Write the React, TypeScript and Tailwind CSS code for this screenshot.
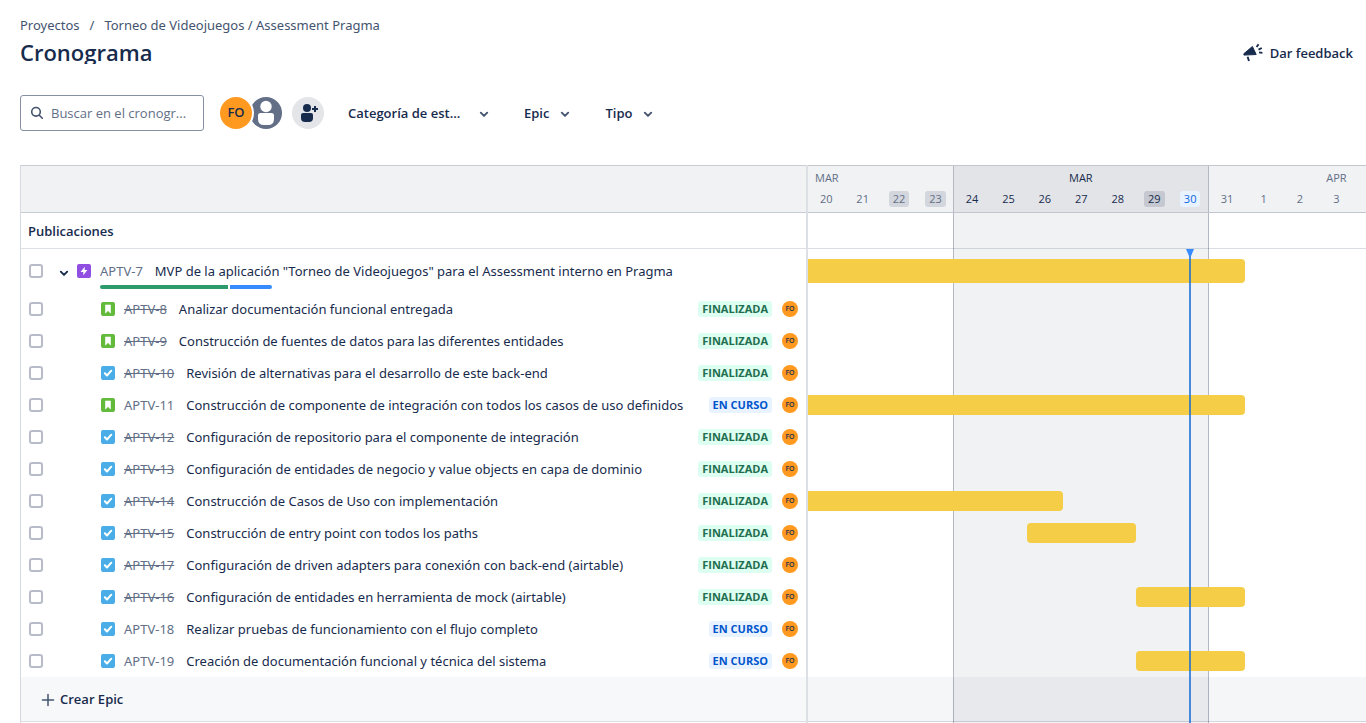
import React from "react";

type IssueType = "story" | "task";
type Status = "FINALIZADA" | "EN CURSO";

interface Issue {
  key: string;
  type: IssueType;
  summary: string;
  status: Status;
  bar?: string;
}

const issues: Issue[] = [
  { key: "APTV-8", type: "story", summary: "Analizar documentación funcional entregada", status: "FINALIZADA" },
  { key: "APTV-9", type: "story", summary: "Construcción de fuentes de datos para las diferentes entidades", status: "FINALIZADA" },
  { key: "APTV-10", type: "task", summary: "Revisión de alternativas para el desarrollo de este back-end", status: "FINALIZADA" },
  { key: "APTV-11", type: "story", summary: "Construcción de componente de integración con todos los casos de uso definidos", status: "EN CURSO", bar: "col-start-1 col-span-12 rounded-r" },
  { key: "APTV-12", type: "task", summary: "Configuración de repositorio para el componente de integración", status: "FINALIZADA" },
  { key: "APTV-13", type: "task", summary: "Configuración de entidades de negocio y value objects en capa de dominio", status: "FINALIZADA" },
  { key: "APTV-14", type: "task", summary: "Construcción de Casos de Uso con implementación", status: "FINALIZADA", bar: "col-start-1 col-span-7 rounded-r" },
  { key: "APTV-15", type: "task", summary: "Construcción de entry point con todos los paths", status: "FINALIZADA", bar: "col-start-7 col-span-3 rounded" },
  { key: "APTV-17", type: "task", summary: "Configuración de driven adapters para conexión con back-end (airtable)", status: "FINALIZADA" },
  { key: "APTV-16", type: "task", summary: "Configuración de entidades en herramienta de mock (airtable)", status: "FINALIZADA", bar: "col-start-10 col-span-3 rounded" },
  { key: "APTV-18", type: "task", summary: "Realizar pruebas de funcionamiento con el flujo completo", status: "EN CURSO" },
  { key: "APTV-19", type: "task", summary: "Creación de documentación funcional y técnica del sistema", status: "EN CURSO", bar: "col-start-10 col-span-3 rounded" },
];

interface Week {
  month: string;
  days: number[];
  box: string;
  monthClass: string;
}

const weeks: Week[] = [
  { month: "MAR", days: [20, 21, 22, 23], box: "col-span-4 bg-[#f1f2f4] text-[#626f86]", monthClass: "pl-[7px] text-left" },
  { month: "MAR", days: [24, 25, 26, 27, 28, 29, 30], box: "col-span-7 -ml-px border-x border-[#b3b8c3] bg-[#e3e4e8]", monthClass: "text-center" },
  { month: "APR", days: [31, 1, 2, 3], box: "col-span-7 bg-[#f1f2f4] text-[#626f86]", monthClass: "text-center" },
];

function dayClass(day: number) {
  if (day === 30) return "bg-[#e9f2ff] text-[#0c66e4]";
  if (day === 29) return "bg-[#c5c8d1]";
  if (day === 22 || day === 23) return "bg-[#d3d6dd]";
  return "";
}

function Chevron({ className }: { className: string }) {
  return (
    <svg viewBox="0 0 16 16" className={className} fill="none" stroke="currentColor" strokeWidth="1.900" strokeLinecap="round" strokeLinejoin="round" aria-hidden="true">
      <path d="M4.800 6.700 8 9.900l3.200-3.200" />
    </svg>
  );
}

function Megaphone() {
  return (
    <svg viewBox="0 0 20 20" className="size-5" fill="#172b4d" stroke="#172b4d" aria-hidden="true">
      <path d="M.8 10.800 9.400 3.500l3.800 8-12.200.6z" strokeWidth="1" strokeLinejoin="round" />
      <path d="M4.600 13.800 6 18M13.600 4l1.900-2.700M15.500 6.700l3.300-1.700M16 9.400l3.400.5" fill="none" strokeWidth="1.900" />
    </svg>
  );
}

function EpicIcon() {
  return (
    <svg viewBox="0 0 14 14" className="size-3.5 shrink-0" role="img" aria-label="Epic">
      <rect width="14" height="14" rx="2" fill="#904ee2" />
      <path d="M7.700 2.800v3.300h2.700L6.300 11.200V7.900H3.600z" fill="#fff" />
    </svg>
  );
}

function TypeIcon({ type }: { type: IssueType }) {
  if (type === "story") {
    return (
      <svg viewBox="0 0 14 14" className="size-3.5 shrink-0" role="img" aria-label="Historia">
        <rect width="14" height="14" rx="2" fill="#63ba3c" />
        <path d="M4.500 3h5v8L7 8.600 4.500 11z" fill="#fff" stroke="#fff" strokeWidth=".6" strokeLinejoin="round" />
      </svg>
    );
  }
  return (
    <svg viewBox="0 0 14 14" className="size-3.5 shrink-0" role="img" aria-label="Tarea">
      <rect width="14" height="14" rx="2" fill="#4bade8" />
      <path d="m3.800 7.300 2.200 2.200 4.300-4.800" fill="none" stroke="#fff" strokeWidth="2" strokeLinecap="round" strokeLinejoin="round" />
    </svg>
  );
}

function Check({ label }: { label: string }) {
  return (
    <input
      type="checkbox"
      aria-label={label}
      className="block size-3.5 appearance-none rounded-[3px] border-2 border-[#b7bcc8] bg-white checked:bg-[#0c66e4]"
    />
  );
}

function FilterButton({ label, slot = "" }: { label: string; slot?: string }) {
  return (
    <button type="button" className="flex h-8 items-center gap-2 rounded px-3 pt-0.5 text-[13px] font-semibold">
      <span className={`text-left whitespace-nowrap ${slot}`}>{label}</span>
      <Chevron className="size-4 text-[#44546f]" />
    </button>
  );
}

function IssueRow({ issue }: { issue: Issue }) {
  const done = issue.status === "FINALIZADA";
  return (
    <tr className="h-8">
      <td className="p-0 pl-2">
        <Check label={`Seleccionar ${issue.key}`} />
      </td>
      <td className="p-0">
        <div className="flex items-center pl-10 font-['Noto_Sans','Open_Sans',sans-serif] whitespace-nowrap">
          <TypeIcon type={issue.type} />
          <a href={`#${issue.key}`} className={`ml-[9px] text-[#626f86] ${done ? "line-through" : ""}`}>
            {issue.key}
          </a>
          <span className="ml-3">{issue.summary}</span>
        </div>
      </td>
      <td className="p-0">
        <div className="flex justify-end">
          <span
            className={`rounded-[3px] px-1 text-[11px] leading-4 font-bold whitespace-nowrap ${
              done ? "bg-[#dcfff1] text-[#216e4e]" : "bg-[#e9f2ff] text-[#0055cc]"
            }`}
          >
            {issue.status}
          </span>
        </div>
      </td>
      <td className="p-0 pr-2">
        <div className="ml-auto flex size-4 items-center justify-center rounded-full bg-[#ff991f] text-[7px] font-semibold">FO</div>
      </td>
    </tr>
  );
}

function IssuePanel() {
  return (
    <section className="w-[788px] shrink-0 border-r-2 border-l border-r-[#dcdfe4] border-l-[#d5d9e0]">
      <div className="h-12 border-y border-[#c7cbd3] bg-[#f1f2f4]" />
      <h2 className="flex h-9 items-center border-b border-[#dcdfe4] pt-0.5 pl-[7px] text-[13px] font-semibold">Publicaciones</h2>
      <table className="w-full table-fixed border-collapse text-[13px] leading-5">
        <colgroup>
          <col className="w-10" />
          <col />
          <col className="w-20" />
          <col className="w-[34px]" />
        </colgroup>
        <tbody>
          <tr className="h-11">
            <td className="p-0 pl-2">
              <Check label="Seleccionar APTV-7" />
            </td>
            <td className="p-0" colSpan={3}>
              <div className="relative flex h-11 items-center pl-[15px] font-['Noto_Sans','Open_Sans',sans-serif] whitespace-nowrap">
                <button type="button" aria-label="Contraer APTV-7" className="mr-[5px] -ml-5 pt-1 pl-0">
                  <Chevron className="size-4 text-[#172b4d]" />
                </button>
                <EpicIcon />
                <a href="#APTV-7" className="ml-[9px] text-[#626f86]">
                  APTV-7
                </a>
                <span className="ml-3">MVP de la aplicación "Torneo de Videojuegos" para el Assessment interno en Pragma</span>
                <div className="absolute bottom-1 left-[39px] flex h-1 w-[172px] gap-0.5 overflow-hidden rounded-full">
                  <div className="grow-[3] basis-0 bg-[#2d9b6c]" />
                  <div className="grow basis-0 bg-[#388bff]" />
                </div>
              </div>
            </td>
          </tr>
          {issues.map((issue) => (
            <IssueRow key={issue.key} issue={issue} />
          ))}
        </tbody>
      </table>
      <div className="flex h-[45px] items-center border-b border-[#dcdfe4] bg-[#f7f8f9] pl-5">
        <button type="button" className="flex items-center gap-[5px] pt-px text-[13px] font-semibold">
          <svg viewBox="0 0 14 14" className="size-3.5" stroke="#44546f" strokeWidth="1.500" strokeLinecap="round" aria-hidden="true">
            <path d="M7 1.500v11M1.500 7h11" />
          </svg>
          Crear Epic
        </button>
      </div>
    </section>
  );
}

function Timeline() {
  return (
    <section className="min-w-0 flex-1 overflow-hidden">
      <div className="relative flex h-full min-w-[656px] flex-col">
        <div className="absolute inset-0 grid grid-cols-18">
          <div className="col-span-7 col-start-5 -ml-px border-x border-[#b3b8c3] bg-[#f1f2f4]" />
        </div>
        <header className="relative grid h-12 grid-cols-18 border-y border-[#c1c6cf] text-[11px]">
          {weeks.map((week) => (
            <div key={week.days[0]} className={`grid grid-cols-subgrid content-start pt-1 ${week.box}`}>
              <span className={`col-span-full leading-4 ${week.monthClass}`}>{week.month}</span>
              {week.days.map((day) => (
                <span key={day} className="flex justify-center pt-[5px]">
                  <span className={`min-w-5 rounded-[3px] px-1 text-center leading-4 ${dayClass(day)}`}>{day}</span>
                </span>
              ))}
            </div>
          ))}
        </header>
        <div className="relative h-9 border-b border-[#091e42]/15" />
        <div className="relative grid h-11 grid-cols-18 items-center">
          <div className="col-span-12 h-6 rounded-r bg-[#f5cd47]" />
        </div>
        {issues.map((issue) => (
          <div key={issue.key} className="relative grid h-8 grid-cols-18 items-center">
            {issue.bar && <div className={`h-5 bg-[#f5cd47] ${issue.bar}`} />}
          </div>
        ))}
        <div className="relative h-[45px] border-b border-[#091e42]/15 bg-[#091e42]/4" />
        <div className="pointer-events-none absolute inset-0 grid grid-cols-18 pt-[84px]">
          <div className="col-start-11 flex flex-col items-center pr-0.5">
            <svg viewBox="0 0 8 7" className="h-[7px] w-2 shrink-0" fill="#388bff" aria-hidden="true">
              <path d="M0 0h8L5 7H3z" />
            </svg>
            <div className="w-0.5 flex-1 bg-[#1d6fd8]/80" />
          </div>
        </div>
      </div>
    </section>
  );
}

export default function App() {
  return (
    <div className="flex min-h-screen flex-col overflow-hidden bg-white pl-5 font-['Open_Sans','Noto_Sans',sans-serif] text-[#172b4d]">
      <nav aria-label="Ruta" className="flex gap-2.5 pt-[15px] font-['Noto_Sans','Open_Sans',sans-serif] text-[13px] leading-5 text-[#44546f]">
        <a href="#proyectos">Proyectos</a>
        <span>/</span>
        <a href="#torneo">Torneo de Videojuegos / Assessment Pragma</a>
      </nav>
      <div className="flex items-center justify-between pt-1 pr-[13px]">
        <h1 className="h-6 overflow-hidden text-[22px] leading-6 font-semibold">Cronograma</h1>
        <button type="button" className="flex items-center gap-[7px] pt-0.5 text-[13px] leading-6 font-semibold">
          <Megaphone />
          Dar feedback
        </button>
      </div>
      <div className="flex items-center pt-[30px] pb-[34px]">
        <label className="flex h-9 w-[184px] items-center gap-1.5 rounded-[3px] border border-[#8590a2] px-2">
          <svg viewBox="0 0 16 16" className="size-4 shrink-0" fill="none" stroke="#44546f" strokeWidth="1.600" strokeLinecap="round" aria-hidden="true">
            <circle cx="7" cy="6.800" r="4.300" />
            <path d="m10.300 10.200 3 3" />
          </svg>
          <input
            type="text"
            aria-label="Buscar en el cronograma"
            placeholder="Buscar en el cronogr..."
            className="w-full min-w-0 pt-0.5 text-[13px] outline-none placeholder:text-[#626f86]"
          />
        </label>
        <div className="ml-4 flex">
          <button type="button" aria-label="Filtrar por FO" className="z-10 size-8 rounded-full bg-[#ff991f] text-[13px] font-semibold ring-2 ring-white">
            <span aria-hidden="true">FO</span>
          </button>
          <button type="button" aria-label="Sin asignar" className="-ml-0.5 size-8 rounded-full">
            <svg viewBox="0 0 32 32" className="size-8" aria-hidden="true">
              <circle cx="16" cy="16" r="16" fill="#626f86" />
              <circle cx="16" cy="9.500" r="5.700" fill="#fff" />
              <path d="M8 18.500q0-2.500 2.500-2.500h11q2.500 0 2.500 2.500V22q0 6-6 6h-4q-6 0-6-6z" fill="#fff" />
            </svg>
          </button>
        </div>
        <button type="button" aria-label="Añadir personas" className="ml-2.5 size-8 rounded-full">
          <svg viewBox="0 0 32 32" className="size-8" aria-hidden="true">
            <circle cx="16" cy="16" r="16" fill="#e4e5e9" />
            <circle cx="15" cy="11" r="4" fill="#172b4d" />
            <path d="M9 18q0-2 2-2h8q2 0 2 2v3q0 4-4 4h-4q-4 0-4-4z" fill="#172b4d" />
            <path d="M23 9v6M20 12h6" stroke="#172b4d" strokeWidth="2" />
          </svg>
        </button>
        <div className="ml-3 flex gap-2">
          <FilterButton label="Categoría de est..." slot="w-[120px]" />
          <FilterButton label="Epic" />
          <FilterButton label="Tipo" />
        </div>
      </div>
      <main className="flex flex-1">
        <IssuePanel />
        <Timeline />
      </main>
    </div>
  );
}
